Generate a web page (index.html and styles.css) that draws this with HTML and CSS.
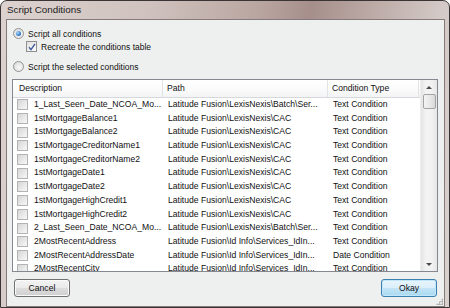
FILE: index.html
```html
<!DOCTYPE html>
<html lang="en">
<head>
    <meta charset="UTF-8">
    <title>Script Conditions</title>
    <link rel="stylesheet" href="styles.css">
</head>
<body>

    <div class="window">
        <div class="titlebar">Script Conditions</div>
        <div class="client">
            <div class="option">
                <span class="radio checked"></span>Script all conditions
            </div>
            <div class="option sub">
                <span class="check">
                    <svg width="8" height="8" viewBox="0 0 8 8"><path d="M1 4.2 L3 6.6 L7 0.8" fill="none" stroke="#3d5a9a" stroke-width="1.4"/></svg>
                </span>Recreate the conditions table
            </div>
            <div class="option gap">
                <span class="radio"></span>Script the selected conditions
            </div>

            <div class="list">
                <div class="grid">
                    <div class="head">
                        <div class="th">Description</div>
                        <div class="th">Path</div>
                        <div class="th">Condition Type</div>
                        <div class="th"></div>
                    </div>
                    <div class="row"><div class="td desc"><span class="box"></span>1_Last_Seen_Date_NCOA_Mo...</div><div class="td">Latitude Fusion\LexisNexis\Batch\Ser...</div><div class="td">Text Condition</div></div>
                    <div class="row"><div class="td desc"><span class="box"></span>1stMortgageBalance1</div><div class="td">Latitude Fusion\LexisNexis\CAC</div><div class="td">Text Condition</div></div>
                    <div class="row"><div class="td desc"><span class="box"></span>1stMortgageBalance2</div><div class="td">Latitude Fusion\LexisNexis\CAC</div><div class="td">Text Condition</div></div>
                    <div class="row"><div class="td desc"><span class="box"></span>1stMortgageCreditorName1</div><div class="td">Latitude Fusion\LexisNexis\CAC</div><div class="td">Text Condition</div></div>
                    <div class="row"><div class="td desc"><span class="box"></span>1stMortgageCreditorName2</div><div class="td">Latitude Fusion\LexisNexis\CAC</div><div class="td">Text Condition</div></div>
                    <div class="row"><div class="td desc"><span class="box"></span>1stMortgageDate1</div><div class="td">Latitude Fusion\LexisNexis\CAC</div><div class="td">Text Condition</div></div>
                    <div class="row"><div class="td desc"><span class="box"></span>1stMortgageDate2</div><div class="td">Latitude Fusion\LexisNexis\CAC</div><div class="td">Text Condition</div></div>
                    <div class="row"><div class="td desc"><span class="box"></span>1stMortgageHighCredit1</div><div class="td">Latitude Fusion\LexisNexis\CAC</div><div class="td">Text Condition</div></div>
                    <div class="row"><div class="td desc"><span class="box"></span>1stMortgageHighCredit2</div><div class="td">Latitude Fusion\LexisNexis\CAC</div><div class="td">Text Condition</div></div>
                    <div class="row"><div class="td desc"><span class="box"></span>2_Last_Seen_Date_NCOA_Mo...</div><div class="td">Latitude Fusion\LexisNexis\Batch\Ser...</div><div class="td">Text Condition</div></div>
                    <div class="row"><div class="td desc"><span class="box"></span>2MostRecentAddress</div><div class="td">Latitude Fusion\Id Info\Services_IdIn...</div><div class="td">Text Condition</div></div>
                    <div class="row"><div class="td desc"><span class="box"></span>2MostRecentAddressDate</div><div class="td">Latitude Fusion\Id Info\Services_IdIn...</div><div class="td">Date Condition</div></div>
                    <div class="row"><div class="td desc"><span class="box"></span>2MostRecentCity</div><div class="td">Latitude Fusion\Id Info\Services_IdIn...</div><div class="td">Text Condition</div></div>
                </div>
                <div class="scrollbar">
                    <div class="arrow up"></div>
                    <div class="thumb"></div>
                    <div class="track"></div>
                    <div class="arrow down"></div>
                </div>
            </div>

            <div class="buttons">
                <button class="btn">Cancel</button>
                <button class="btn default">Okay</button>
            </div>
            <span class="grip"></span>
        </div>
    </div>

</body>
</html>
```

FILE: styles.css
```css
body {
    margin: 0;
    font-family: "Liberation Sans", Arial, sans-serif;
    background-color: #ffffff;
}
.window {
    width: 448px;
    height: 306px;
    border: 1px solid #3b3434;
    border-radius: 7px 7px 0 0;
    background: linear-gradient(100deg, #dcd2cf 0%, #cfc2be 30%, #b9a5a0 52%, #a68f8a 62%, #b8a5a1 72%, #d3c9c6 88%, #d9d1ce 100%);
    display: flex;
    flex-direction: column;
}
.titlebar {
    height: 18px;
    line-height: 18px;
    padding-left: 6px;
    font-size: 9.8px;
    color: #1c1c1c;
}
.client {
    position: relative;
    margin: 0 4px 0 5px;
    height: 280px;
    border: 1px solid #86797a;
    background-color: #eef0ef;
    padding: 7px 6px 3px 5px;
    display: flex;
    flex-direction: column;
    font-size: 8.6px;
    color: #111;
}
.option {
    height: 13px;
    display: flex;
    align-items: center;
    padding-left: 1px;
    font-size: 8.5px;
}
.option.sub {
    padding-left: 14px;
}
.option.gap {
    margin-top: 7px;
    margin-bottom: 6px;
}
.radio {
    position: relative;
    width: 9px;
    height: 9px;
    margin-right: 4px;
    border: 1px solid #939393;
    border-radius: 50%;
    background: radial-gradient(circle at 60% 60%, #f8f8f8, #d6d6d6);
}
.radio.checked::after {
    content: "";
    position: absolute;
    left: 2px;
    top: 2px;
    width: 5px;
    height: 5px;
    border-radius: 50%;
    background: radial-gradient(circle at 35% 35%, #a9d9fb, #2a6fc1 70%, #1c4f95);
}
.check {
    width: 9px;
    height: 9px;
    margin-right: 4px;
    border: 1px solid #8f8f8f;
    background: linear-gradient(135deg, #e0e0e0, #fbfbfb);
    display: flex;
    align-items: center;
    justify-content: center;
}
.list {
    height: 191px;
    border: 1px solid #838891;
    background-color: #ffffff;
    display: flex;
}
.grid {
    flex: 1;
    overflow: hidden;
}
.head, .row {
    display: grid;
    grid-template-columns: 150px 165px 91px 2px;
}
.head {
    height: 17px;
    border-bottom: 1px solid #d6d8dc;
    background: linear-gradient(#ffffff, #fafafa 60%, #f3f4f6);
}
.th {
    border-right: 1px solid #e2e3e5;
    line-height: 17px;
    padding-left: 4px;
    white-space: nowrap;
}
.th:first-child {
    padding-left: 6px;
}
.th:last-child {
    border-right: none;
}
.row {
    height: 13.7px;
}
.td {
    line-height: 13.7px;
    padding-left: 5px;
    white-space: nowrap;
    overflow: hidden;
}
.td.desc {
    display: flex;
    align-items: center;
    padding-left: 4px;
}
.box {
    flex: none;
    width: 9px;
    height: 9px;
    margin-right: 6px;
    border: 1px solid #b3b3b3;
    background: linear-gradient(135deg, #d6d6d6, #f8f8f8);
}
.scrollbar {
    width: 16px;
    display: flex;
    flex-direction: column;
    align-items: center;
    background: linear-gradient(90deg, #e4e4e4, #f3f3f3 30%, #f1f1f1 70%, #e6e6e6);
    border-left: 1px solid #eeeeee;
}
.arrow {
    height: 14px;
    width: 16px;
    display: flex;
    align-items: center;
    justify-content: center;
}
.arrow.up::after {
    content: "";
    border: 3px solid transparent;
    border-top: none;
    border-bottom: 3px solid #4a4a4a;
}
.arrow.down::after {
    content: "";
    border: 3px solid transparent;
    border-bottom: none;
    border-top: 3px solid #4a4a4a;
}
.thumb {
    width: 11px;
    height: 13px;
    border: 1px solid #a3a3a3;
    border-radius: 2px;
    background: linear-gradient(90deg, #f4f4f4, #e8e8e8 50%, #d9d9d9);
}
.track {
    flex: 1;
}
.buttons {
    margin-top: 7px;
    padding: 0 1px 0 2px;
    display: flex;
    justify-content: space-between;
}
.btn {
    width: 56px;
    height: 18px;
    padding: 0;
    border: 1px solid #707070;
    border-radius: 3px;
    font-family: inherit;
    font-size: 8.6px;
    color: #111;
    background: linear-gradient(#f3f3f3, #ebebeb 48%, #dddddd 52%, #cfcfcf);
    box-shadow: inset 0 0 0 1px #fbfbfb;
}
.btn.default {
    border-color: #3c7fb1;
    background: linear-gradient(#e8f5fc, #dbeffb 48%, #c2e4f6 52%, #a9d9f2);
    box-shadow: inset 0 0 0 1px #bfe6fb;
}
.grip {
    position: absolute;
    right: 1px;
    bottom: 1px;
    width: 7px;
    height: 7px;
    background: radial-gradient(circle, #9a9a9a 0.8px, transparent 1px) 0 0 / 2.5px 2.5px;
    clip-path: polygon(100% 0, 100% 100%, 0 100%);
}
```
